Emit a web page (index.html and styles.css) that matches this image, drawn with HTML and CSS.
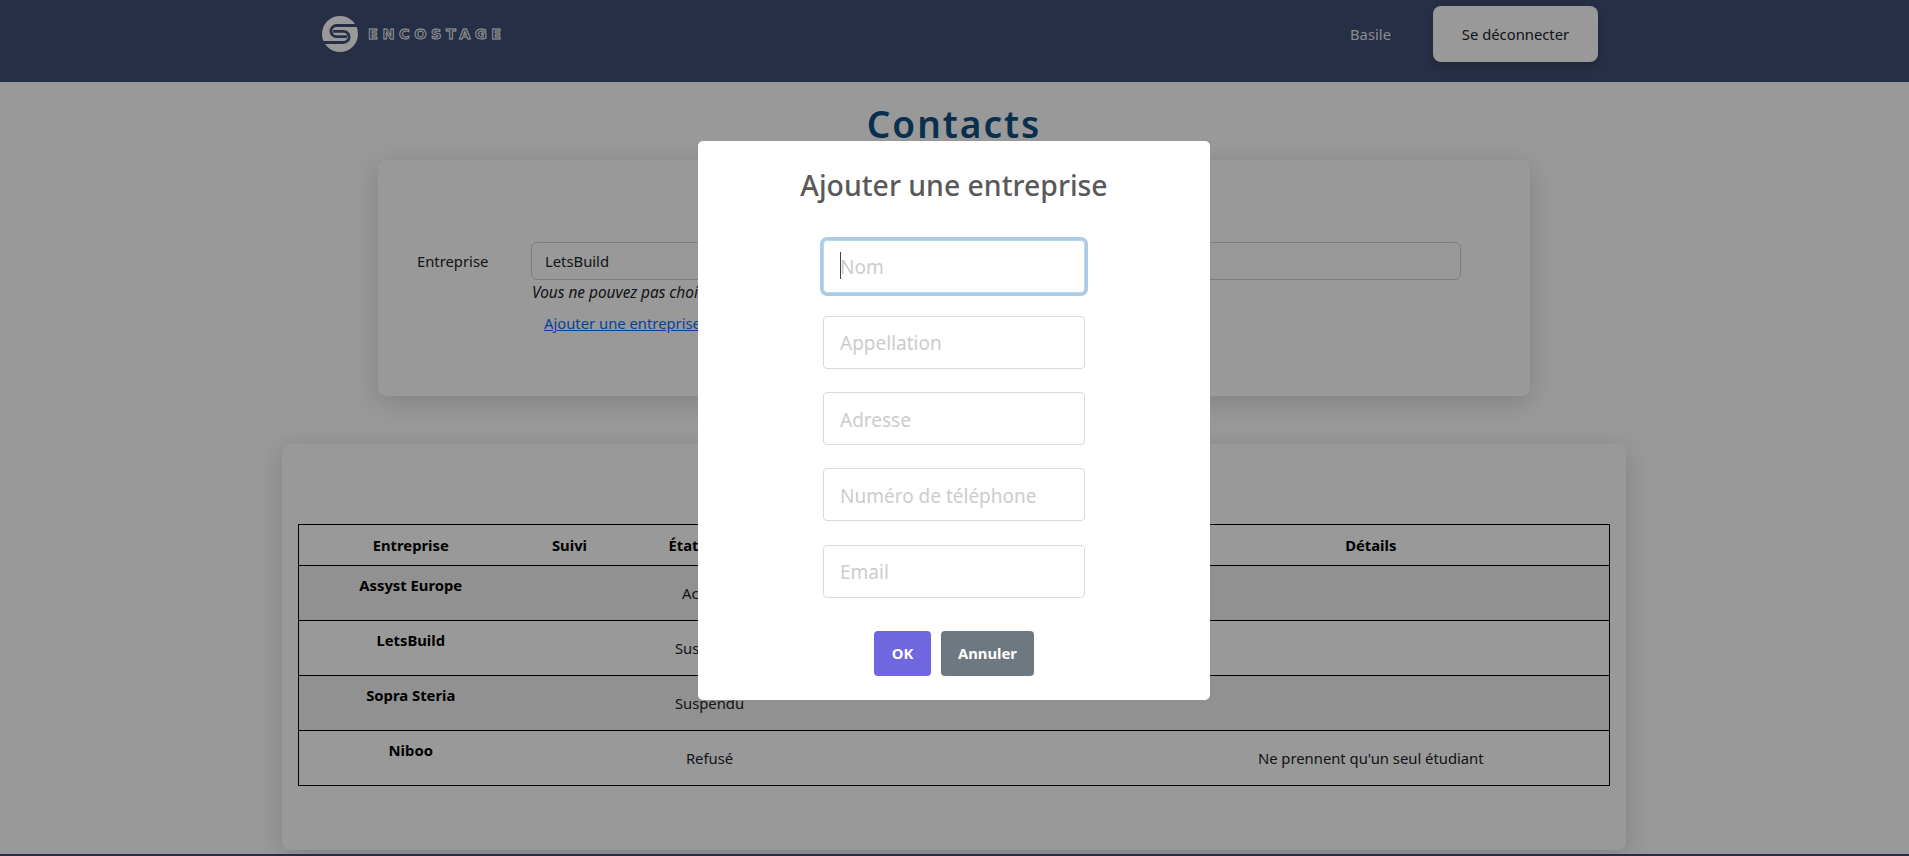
FILE: index.html
```html
<!DOCTYPE html>
<html lang="fr">
<head>
<meta charset="utf-8">
<title>Contacts</title>
<link rel="stylesheet" href="styles.css">
</head>
<body>
<header class="navbar">
  <a class="brand" href="#">
    <svg class="brand-icon" viewBox="0 0 36 36" width="36" height="36" aria-hidden="true">
      <circle cx="18" cy="18" r="18" fill="#fff"/>
      <path d="M36 9.5H14.5a5.6 5.6 0 0 0 0 11.2H25" fill="none" stroke="#404f74" stroke-width="2.8"/>
      <path d="M0 26.5H21.5a5.6 5.6 0 0 0 0-11.2H11" fill="none" stroke="#404f74" stroke-width="2.8"/>
    </svg>
    <span class="brand-name">ENCOSTAGE</span>
  </a>
  <nav class="nav-right">
    <span class="nav-user">Basile</span>
    <button class="logout" type="button">Se déconnecter</button>
  </nav>
</header>

<main class="page">
  <h1 class="page-title">Contacts</h1>

  <section class="card card-form">
    <div class="form-row">
      <label class="form-label">Entreprise</label>
      <div class="form-field">
        <div class="fake-select">LetsBuild</div>
        <p class="note">Vous ne pouvez pas choisir</p>
        <a class="add-link" href="#">Ajouter une entreprise</a>
      </div>
    </div>
  </section>

  <section class="card card-table">
    <table class="contacts">
      <colgroup>
        <col class="c-name"><col class="c-follow"><col class="c-state"><col class="c-gap"><col class="c-details">
      </colgroup>
      <thead>
        <tr><th>Entreprise</th><th>Suivi</th><th class="th-state">État</th><th></th><th>Détails</th></tr>
      </thead>
      <tbody>
        <tr class="odd"><th class="name">Assyst Europe</th><td></td><td>Accepté</td><td></td><td></td></tr>
        <tr><th class="name">LetsBuild</th><td></td><td>Suspendu</td><td></td><td></td></tr>
        <tr class="odd"><th class="name">Sopra Steria</th><td></td><td>Suspendu</td><td></td><td></td></tr>
        <tr><th class="name">Niboo</th><td></td><td>Refusé</td><td></td><td>Ne prennent qu'un seul étudiant</td></tr>
      </tbody>
    </table>
  </section>
</main>
<footer class="footer"></footer>

<div class="overlay">
  <div class="modal">
    <h2 class="modal-title">Ajouter une entreprise</h2>
    <div class="modal-fields">
      <div class="field is-focused">
        <input class="modal-input" type="text" placeholder="Nom">
        <span class="caret"></span>
      </div>
      <div class="field"><input class="modal-input" type="text" placeholder="Appellation"></div>
      <div class="field"><input class="modal-input" type="text" placeholder="Adresse"></div>
      <div class="field"><input class="modal-input" type="text" placeholder="Numéro de téléphone"></div>
      <div class="field"><input class="modal-input" type="text" placeholder="Email"></div>
    </div>
    <div class="modal-actions">
      <button class="btn btn-ok" type="button">OK</button>
      <button class="btn btn-cancel" type="button">Annuler</button>
    </div>
  </div>
</div>
</body>
</html>
```
FILE: styles.css
```css
* { box-sizing: border-box; }
html, body { margin: 0; height: 856px; overflow: hidden; }
body {
  font-family: "Noto Sans", "Open Sans", sans-serif;
  font-size: 14.8px;
  color: #212529;
  background: #fff;
}

.navbar {
  height: 82px;
  background: #404f74;
  display: flex;
  align-items: flex-start;
  justify-content: space-between;
  padding: 0 311px 0 322px;
}
.brand { display: flex; align-items: center; gap: 10px; margin-top: 16px; text-decoration: none; }
.brand-icon { display: block; }
.brand-name {
  font-family: "DejaVu Sans", sans-serif;
  font-weight: 700;
  font-size: 14.5px;
  letter-spacing: 4.5px;
  color: transparent;
  -webkit-text-stroke: 0.9px #fff;
  margin-top: -1px;
}
.nav-right { display: flex; align-items: center; gap: 42px; margin-top: 6px; }
.nav-user { color: rgba(255, 255, 255, .88); }
.logout {
  width: 165px;
  height: 56px;
  border: 0;
  border-radius: 8px;
  background: #fff;
  color: #212529;
  font: inherit;
  box-shadow: 0 4px 10px rgba(0, 0, 0, .2);
}

.page { display: flex; flex-direction: column; align-items: center; padding-right: 1px; }
.page-title {
  margin: 0;
  height: 78px;
  line-height: 84px;
  font-size: 37px;
  font-weight: 600;
  letter-spacing: 2px;
  color: #0c5084;
}
.card {
  background: #fff;
  border-radius: 8px;
  box-shadow: 0 6px 28px rgba(0, 0, 0, .16);
}
.card-form { width: 1152px; height: 236px; padding: 82px 69px 0 39px; margin-bottom: 48px; }
.form-row { display: grid; grid-template-columns: 114px 1fr; }
.form-label { line-height: 38px; }
.fake-select {
  height: 38px;
  line-height: 36px;
  padding-left: 13px;
  border: 1px solid #ced4da;
  border-radius: 6px;
}
.note { margin: 1px 0 0 1px; font-size: 15.4px; font-style: italic; line-height: 24px; }
.add-link { display: block; margin: 6px 0 0 13px; color: #0d6efd; line-height: 24px; }

.card-table { width: 1344px; height: 406px; padding: 80px 16px 0; }
.contacts { width: 1311px; border-collapse: collapse; table-layout: fixed; border: 1px solid #000; }
.c-name { width: 224px; }
.c-follow { width: 94px; }
.c-state { width: 186px; }
.c-gap { width: 330px; }
.c-details { width: 477px; }
.contacts thead tr { height: 41px; }
.contacts tbody tr { height: 55px; border-top: 1px solid #000; }
.contacts th, .contacts td { padding: 0; text-align: center; font-weight: 400; }
.contacts th { font-weight: 700; color: #000; }
.contacts .th-state { padding-right: 52px; }
.contacts .name { vertical-align: top; padding-top: 9px; }
.odd { background: rgba(0, 0, 0, .05); }
.footer { height: 2px; margin-top: 4px; background: #404f74; }

.overlay {
  position: fixed;
  inset: 0;
  background: rgba(0, 0, 0, .4);
  display: flex;
  justify-content: center;
  align-items: flex-start;
  padding: 141px 1px 0 0;
}
.modal {
  width: 512px;
  height: 559px;
  background: #fff;
  border-radius: 5px;
  padding-top: 20px;
  display: flex;
  flex-direction: column;
  align-items: center;
}
.modal-title { margin: 0; font-size: 28.4px; font-weight: 500; line-height: 48px; color: #595959; }
.modal-fields { margin-top: 30.5px; display: flex; flex-direction: column; gap: 23.3px; }
.field { position: relative; width: 262px; height: 53px; }
.modal-input {
  display: block;
  width: 100%;
  height: 100%;
  padding: 2px 16px 0;
  border: 1px solid #d9d9d9;
  border-radius: 4px;
  background: #fff;
  font: inherit;
  font-size: 19px;
  color: #545454;
  outline: 0;
}
.modal-input::placeholder { color: #ccc; opacity: 1; }
.is-focused .modal-input { border-color: #b4dbed; box-shadow: 0 0 0 3px #aecbe6; }
.caret { position: absolute; left: 17px; top: 12px; width: 1px; height: 27px; background: #444; }
.modal-actions { margin-top: 33.6px; display: flex; gap: 10px; }
.btn {
  height: 44.6px;
  padding: 0 0 2px;
  border: 0;
  border-radius: 4px;
  color: #fff;
  font: inherit;
  font-weight: 700;
}
.btn-ok { width: 57px; background: #7066e0; }
.btn-cancel { width: 93px; background: #6e7881; }
```
